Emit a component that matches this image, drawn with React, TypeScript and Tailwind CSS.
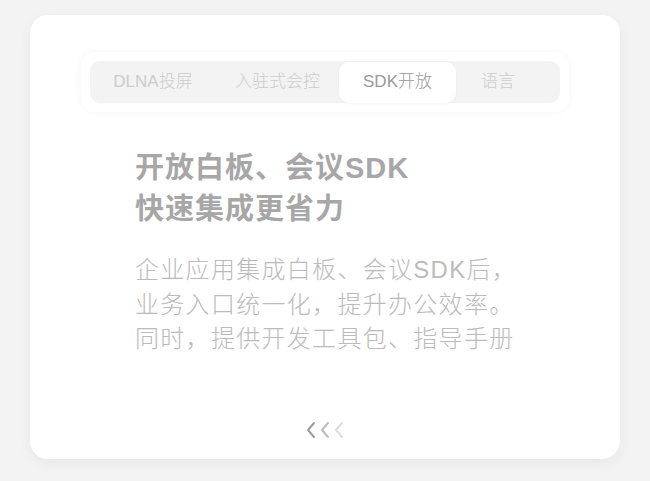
const tabs = [
  { label: "DLNA投屏", width: "w-[126px]", active: false },
  { label: "入驻式会控", width: "w-[123px]", active: false },
  { label: "SDK开放", width: "w-[117px]", active: true },
  { label: "语言", width: "w-[84px]", active: false },
]

function Chevrons() {
  return (
    <svg width="40" height="18" viewBox="0 0 40 18" fill="none" strokeLinecap="round" strokeLinejoin="round">
      <polyline points="9,2 3,9 9,16" stroke="#9c9c9c" strokeWidth="2" />
      <polyline points="23,2 17,9 23,16" stroke="#bdbdbd" strokeWidth="2" />
      <polyline points="37,2 31,9 37,16" stroke="#dcdcdc" strokeWidth="2" />
    </svg>
  )
}

export default function App() {
  return (
    <div className="min-h-[481px] w-[650px] bg-[#f3f3f3] pt-[15px] pl-[30px] font-['Liberation_Sans','Noto_Sans_CJK_SC',sans-serif]">
      <div className="flex h-[444px] w-[590px] flex-col items-center rounded-[18px] bg-white pt-[37px] shadow-[0_4px_14px_rgba(0,0,0,0.05)]">
        <div className="w-[488px] rounded-[14px] bg-white p-[9px] shadow-[0_0_8px_rgba(0,0,0,0.04)]">
          <div className="flex h-[42px] items-center rounded-[10px] bg-[#f3f3f3]">
            {tabs.map((tab) =>
              tab.active ? (
                <div
                  key={tab.label}
                  className={`${tab.width} flex h-[41px] items-center justify-center rounded-[10px] bg-white text-[17px] font-light text-[#9a9a9a] shadow-[0_1px_3px_rgba(0,0,0,0.04)]`}
                >
                  {tab.label}
                </div>
              ) : (
                <div key={tab.label} className={`${tab.width} flex h-[41px] items-center justify-center text-[17px] font-light text-[#cccccc]`}>
                  {tab.label}
                </div>
              )
            )}
          </div>
        </div>

        <div className="mt-[36px] w-[380px] whitespace-nowrap">
          <h1 className="text-[29px] font-bold leading-[41px] tracking-[1px] text-[#a7a7a7]">
            开放白板、会议SDK
            <br />
            快速集成更省力
          </h1>
          <p className="mt-[23px] text-[24px] font-light leading-[34.5px] tracking-[1.3px] text-[#bbbbbb]">
            企业应用集成白板、会议SDK后，
            <br />
            业务入口统一化，提升办公效率。
            <br />
            同时，提供开发工具包、指导手册
          </p>
        </div>

        <div className="mt-auto mb-[20px]">
          <Chevrons />
        </div>
      </div>
    </div>
  )
}
